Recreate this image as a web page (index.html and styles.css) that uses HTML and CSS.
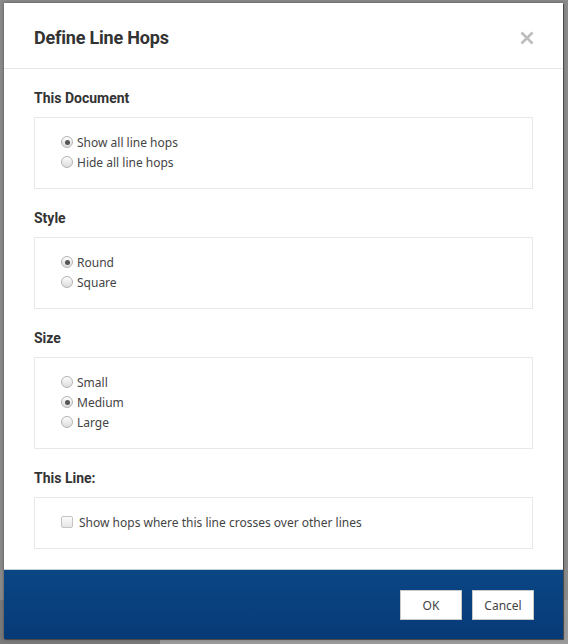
FILE: index.html
```html
<!DOCTYPE html>
<html>
<head>
<meta charset="utf-8">
<link rel="stylesheet" href="styles.css">
</head>
<body>
<div class="backdrop">
  <div class="dialog">
    <div class="header">
      <h1 class="title">Define Line Hops</h1>
      <button class="close" aria-label="Close">
        <svg width="14" height="14" viewBox="0 0 14 14"><path d="M1.5 1.5 L12.5 12.5 M12.5 1.5 L1.5 12.5" stroke="#bdbdbd" stroke-width="2.6" stroke-linecap="butt"/></svg>
      </button>
    </div>
    <div class="content">
      <section class="group">
        <h2 class="label">This Document</h2>
        <div class="box">
          <label class="row"><input type="radio" name="doc" checked><span>Show all line hops</span></label>
          <label class="row"><input type="radio" name="doc"><span>Hide all line hops</span></label>
        </div>
      </section>
      <section class="group">
        <h2 class="label">Style</h2>
        <div class="box">
          <label class="row"><input type="radio" name="style" checked><span>Round</span></label>
          <label class="row"><input type="radio" name="style"><span>Square</span></label>
        </div>
      </section>
      <section class="group">
        <h2 class="label">Size</h2>
        <div class="box">
          <label class="row"><input type="radio" name="size"><span>Small</span></label>
          <label class="row"><input type="radio" name="size" checked><span>Medium</span></label>
          <label class="row"><input type="radio" name="size"><span>Large</span></label>
        </div>
      </section>
      <section class="group">
        <h2 class="label">This Line:</h2>
        <div class="box">
          <label class="row check"><input type="checkbox"><span>Show hops where this line crosses over other lines</span></label>
        </div>
      </section>
    </div>
    <div class="footer">
      <button class="btn">OK</button>
      <button class="btn">Cancel</button>
    </div>
  </div>
</div>
</body>
</html>
```
FILE: styles.css
```css
html, body {
  margin: 0;
  padding: 0;
}
body {
  width: 568px;
  height: 644px;
  background: linear-gradient(90deg, #7a7a7a 0, #7a7a7a 160px, #9a9a9a 160px, #9a9a9a 100%);
  font-family: "Noto Sans", "Open Sans", sans-serif;
  color: #333;
}
.backdrop {
  padding: 3px 5px 5px 4px;
  box-sizing: border-box;
  height: 644px;
  background: linear-gradient(180deg, #8a8a8a 0, #8a8a8a 600px, transparent 600px);
}
.dialog {
  width: 559px;
  height: 636px;
  background: #fff;
  display: flex;
  flex-direction: column;
  box-shadow: 1px 1px 0 #4a4a4a, 0 0 3px rgba(0,0,0,0.4);
}
.header {
  height: 65px;
  border-bottom: 1px solid #e6e6e6;
  display: flex;
  align-items: center;
  justify-content: space-between;
  padding: 0 29px 0 30px;
  flex-shrink: 0;
}
.title {
  margin: 0;
  font-family: Roboto, "Noto Sans", sans-serif;
  font-size: 18px;
  font-weight: 700;
  letter-spacing: -0.2px;
  color: #333;
  padding-top: 4px;
}
.close {
  border: 0;
  background: none;
  padding: 0;
  width: 14px;
  height: 14px;
  margin-top: 5px;
  display: block;
}
.close svg { display: block; }
.content {
  flex: 1;
  padding: 0 30px;
}
.group { margin-top: 19px; }
.label {
  margin: 0 0 9px;
  font-family: Roboto, "Noto Sans", sans-serif;
  font-size: 14px;
  line-height: 20px;
  font-weight: 700;
  color: #333;
}
.box {
  border: 1px solid #e8e8e8;
  padding: 14px 0 16px 26px;
}
.row {
  display: flex;
  align-items: center;
  height: 20px;
  font-size: 12px;
  color: #444;
}
.row input {
  -webkit-appearance: none;
  appearance: none;
  margin: 0 4px 0 0;
  width: 12px;
  height: 12px;
  border: 1px solid #b4b4b4;
  border-radius: 50%;
  background: linear-gradient(180deg, #fdfdfd, #dcdcdc);
  box-sizing: border-box;
  position: relative;
}
.row input:checked::after {
  content: "";
  position: absolute;
  left: 2.5px;
  top: 2.5px;
  width: 5px;
  height: 5px;
  border-radius: 50%;
  background: #555;
}
.row.check input {
  width: 12px;
  height: 12px;
  border-radius: 2px;
  margin-right: 6px;
  background: linear-gradient(180deg, #fcfcfc, #e6e6e6);
  border-color: #c4c4c4;
}
.footer {
  height: 70px;
  flex-shrink: 0;
  box-sizing: border-box;
  border-top: 1px solid #c7cdd6;
  background: linear-gradient(180deg, #0b4684 0, #063a77 100%);
  display: flex;
  justify-content: flex-end;
  gap: 10px;
  padding: 20px 29px 0 0;
}
.btn {
  width: 62px;
  height: 30px;
  background: #fff;
  border: 1px solid #c8c8c8;
  font-family: inherit;
  font-size: 12px;
  color: #444;
  padding: 0;
}
```
